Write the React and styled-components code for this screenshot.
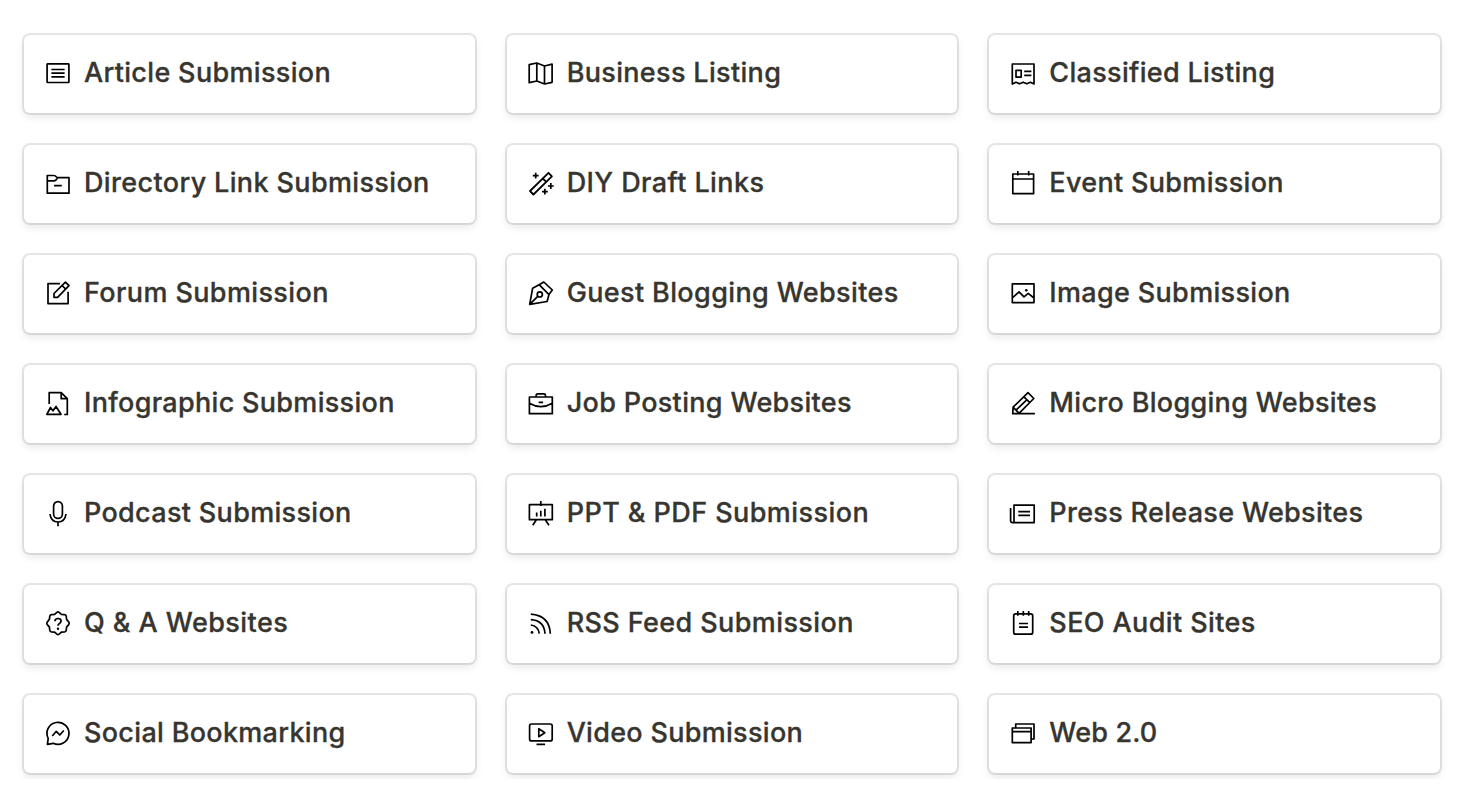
// Submission types board
import styled, { createGlobalStyle } from 'styled-components'

const GlobalStyle = createGlobalStyle`
  body {
    margin: 0;
    background-color: #ffffff;
  }
  *, *::before, *::after {
    box-sizing: border-box;
  }
`;
const Board = styled.main`
  display: grid;
  grid-template-columns: repeat(3, 1fr);
  grid-auto-rows: 78px;
  gap: 32px;
  padding: 35px 24px 6px;
  width: 1464px;
  overflow: hidden;
`;
const Card = styled.a`
  display: flex;
  align-items: flex-start;
  padding: 0 20px;
  border-radius: 6px;
  background-color: #ffffff;
  box-shadow: 0 0 0 2px rgba(15, 15, 15, 0.1), 0 4px 8px rgba(15, 15, 15, 0.1);
  color: #37352f;
`;
const Icon = styled.svg`
  flex: none;
  width: 28px;
  height: 28px;
  margin: 24px 12px 0 0;
  fill: none;
  stroke: #000000;
  stroke-width: 1.7;
  stroke-linejoin: round;
`;
const Title = styled.span`
  margin-top: 20px;
  font-family: Inter, 'Liberation Sans', sans-serif;
  font-size: 27px;
  font-weight: 500;
  line-height: 36px;
  letter-spacing: ${(props) => props.$spacing}px;
  white-space: nowrap;
  -webkit-text-stroke: 0.3px #37352f;
`;

const icons = {
  article: (
    <>
      <rect x="3.1" y="4.9" width="21.8" height="18.6" rx="0.6" />
      <path d="M7.4 10.5h13.2M7.4 14.2h13.2M7.4 17.9h13.2" />
    </>
  ),
  map: <path d="M2.2 5.6 9.8 4l7.7 3 7.6-1.8v18.1L17.5 25 9.8 22l-7.6 1.7zM9.8 4v18M17.5 7v18" />,
  newspaper: (
    <>
      <path d="M3.3 25V5H25v20l-3.6-1.8-3.6 1.6-3.6-1.6-3.6 1.6L7 23.2z" />
      <path d="M7 11.3h5.2v6.8H7zM15.2 12.4h7.2M15.2 16.4h7.2" />
    </>
  ),
  folder: (
    <path d="M3.3 6.5H10q1.4 0 2.2 1.2.8 1 2.2 1H25v15.5H3.3zM3.3 11.9H10q1.6 0 2.4-1.4.8-1.7 2-1.8M10 16.7h7.8" />
  ),
  wand: (
    <>
      <path d="M3 22 21.5 3.8l3.4 3.6L6.4 25.5zM15.7 9.5l3.6 3.4" strokeWidth="1.8" />
      <path d="M8.7 3.8v5.8M5.8 6.7h5.8M23.8 14.1v5.8M20.9 17h5.8M17.9 19.8v5.8M15 22.7h5.8" />
    </>
  ),
  calendar: <path d="M3.8 5h20.8v19.6H3.8zM3.8 10h20.8M8.8 2v4.6M19.7 2v4.6" />,
  compose: (
    <path d="M16 4.7H4v19.9h20.1V12.7M10 18.3v-3.8L21.4 3.2l3.6 3.5-11.4 11.6zM18.1 6.5l3.6 3.6" />
  ),
  infographic: (
    <path d="M5.2 15V3.6h12L23.3 9.7v15.8h-3.1M17.2 3.6v6.1h6.1M2.8 25.3l3.7-6.8L9 21.8l3-4.3 5 7.8z" />
  ),
  nib: (
    <>
      <path d="M2.7 25.4 5.6 9.3l6.5-3.6L16.8 3l8.5 8-3.3 4.6-1.9 6.9zM12.3 5.8l9.7 9.8M2.7 25.4l8.3-8.2" />
      <circle cx="12.8" cy="15.4" r="2.6" />
    </>
  ),
  briefcase: (
    <path d="M2.4 8h22.9v16.7H2.4zM9.2 8V6.4q0-1.6 1.6-1.6h6.1q1.6 0 1.6 1.6V8M2.4 14.2q11.5 6.8 22.9 0M11.6 13.4h4.5" />
  ),
  image: (
    <>
      <path d="M3.3 4.9H25v18.7H3.3zM3.3 19 10 12.8l5 5 4.2-3.4L25 19" />
      <circle cx="17.3" cy="11.2" r="1.3" fill="#000000" stroke="none" />
    </>
  ),
  pencil: (
    <path d="M25.2 24.7H3.7l.4-6.5L19 3.7l5.8 5.8L10 24.3zM15 7.8l5.8 5.8M4.1 18.2l5.9 6M7 21.2l11-10.6" />
  ),
  mic: (
    <>
      <rect x="9.6" y="2.6" width="8.8" height="16.8" rx="4.4" />
      <path d="M6 15q1 8 8 8t8-8M14 23v4.3" />
    </>
  ),
  question: (
    <>
      <path d="M12.9 3.3Q14 2.4 15.1 3.3L17.4 5.3 20.6 5.6Q22 5.8 22.2 7.2L22.6 10.4 24.9 13.2Q25.6 14.3 24.9 15.4L22.6 18.1 22.2 21.3Q22 22.7 20.6 22.9L17.4 23.2 15.1 25.2Q14 26.1 12.9 25.2L10.6 23.2 7.4 22.9Q6 22.7 5.8 21.3L5.4 18.1 3.1 15.4Q2.4 14.3 3.1 13.2L5.4 10.4 5.8 7.2Q6 5.8 7.4 5.6L10.6 5.3z" />
      <path d="M10.9 12.3q0-2.8 3.1-2.8t3.1 2.6q0 1.4-1.6 2.3-1.5.8-1.5 2.4" />
      <circle cx="14" cy="19.7" r="1.2" fill="#000000" stroke="none" />
    </>
  ),
  easel: (
    <path d="M2.4 5.7h22.9v15H2.4zM13.8 2v5M9.2 21l-3.4 5.2M18.4 21l3.6 5.2M9.7 13.6v3.8M13.8 11.7v5.7M17.9 9.7v7.7" />
  ),
  rss: (
    <>
      <path d="M3.8 5.2Q22.5 6.6 23.3 24.7M3.8 10.6Q17.3 11.4 18 24.7M3.8 16Q11.4 17 12.2 24.7" />
      <circle cx="5" cy="23.4" r="1.4" fill="#000000" stroke="none" />
    </>
  ),
  press: <path d="M5 23.6V6.2h20.2v17.4H3.2q-1.6 0-1.6-1.6V9M9.3 12.6H21M9.3 16.4H21" />,
  notepad: (
    <>
      <rect x="4.7" y="4.9" width="19" height="20.3" rx="2" />
      <path d="M8.8 2v4.7M14.3 2v4.7M19.7 2v4.7M10 14.5h9M10 18.1h9" />
    </>
  ),
  messenger: (
    <path d="M3.4 25.4l.8-6A11 11 0 1 1 9.3 24.3zM8.3 17l4-4.7 3.5 3.7 4-4.5" />
  ),
  video: (
    <>
      <rect x="2.6" y="5" width="22.6" height="16.9" rx="2" />
      <path d="M11.8 9.7v8l6-4zM9.5 25.4h8.6" />
    </>
  ),
  windows: <path d="M3.3 9h18.8v14.6H3.3zM3.3 12.6h18.8M6.7 9V5H25v15h-2.9" />,
};

const submissions = [
  { icon: 'article', title: 'Article Submission', spacing: 0.33 },
  { icon: 'map', title: 'Business Listing', spacing: 0.33 },
  { icon: 'newspaper', title: 'Classified Listing', spacing: 0.31 },
  { icon: 'folder', title: 'Directory Link Submission', spacing: 0.36 },
  { icon: 'wand', title: 'DIY Draft Links', spacing: 0.41 },
  { icon: 'calendar', title: 'Event Submission', spacing: 0.32 },
  { icon: 'compose', title: 'Forum Submission', spacing: 0.38 },
  { icon: 'nib', title: 'Guest Blogging Websites', spacing: 0.37 },
  { icon: 'image', title: 'Image Submission', spacing: 0.33 },
  { icon: 'infographic', title: 'Infographic Submission', spacing: 0.31 },
  { icon: 'briefcase', title: 'Job Posting Websites', spacing: 0.32 },
  { icon: 'pencil', title: 'Micro Blogging Websites', spacing: 0.31 },
  { icon: 'mic', title: 'Podcast Submission', spacing: 0.32 },
  { icon: 'easel', title: 'PPT & PDF Submission', spacing: 0.43 },
  { icon: 'press', title: 'Press Release Websites', spacing: 0.31 },
  { icon: 'question', title: 'Q & A Websites', spacing: 0.44 },
  { icon: 'rss', title: 'RSS Feed Submission', spacing: 0.39 },
  { icon: 'notepad', title: 'SEO Audit Sites', spacing: 0.4 },
  { icon: 'messenger', title: 'Social Bookmarking', spacing: 0.31 },
  { icon: 'video', title: 'Video Submission', spacing: 0.3 },
  { icon: 'windows', title: 'Web 2.0', spacing: 0.15 },
];

const App = () => {
  return (
    <>
      <GlobalStyle />
      <Board>
        {submissions.map(({ icon, title, spacing }) => (
          <Card key={title}>
            <Icon viewBox='0 0 28 28'>{icons[icon]}</Icon>
            <Title $spacing={spacing}>{title}</Title>
          </Card>
        ))}
      </Board>
    </>
  )
};

export default App;
